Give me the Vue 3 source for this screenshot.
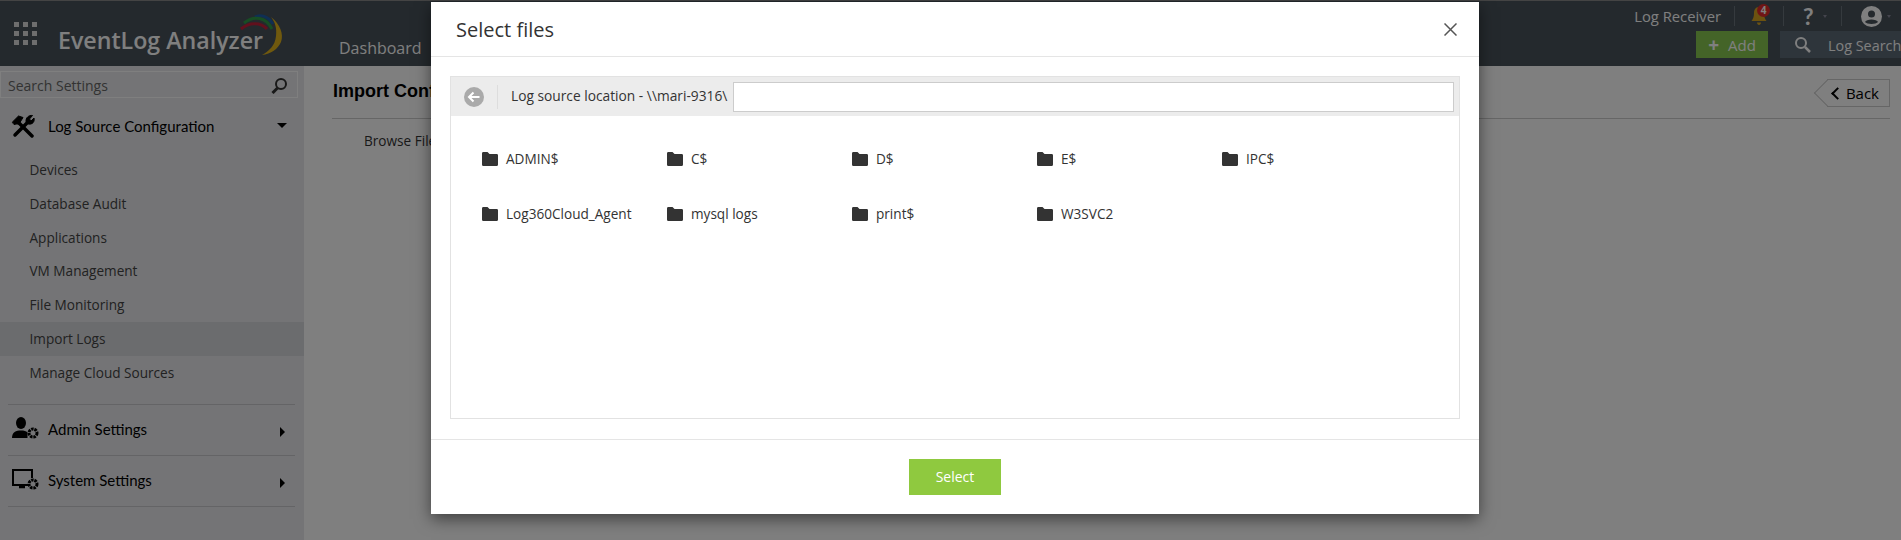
<template>
  <div class="page">
    <header class="topbar">
      <div class="brand">
        <div class="apps"><i v-for="n in 9" :key="n"></i></div>
        <span class="brand-name">EventLog Analyzer</span>
        <svg class="brand-arc" width="46" height="44" viewBox="0 0 46 44" fill="none">
          <path d="M15 3C20 0 28 2 33 10" stroke="#1f5fa8" stroke-width="3" />
          <path d="M4 9C14 1 26 3 32 15" stroke="#2e9a48" stroke-width="3" />
          <path d="M1 15C9 8 21 8 27 15" stroke="#c2203a" stroke-width="3" />
          <path d="M31 3C40 10 44 20 41 28C38 35 31 40 22 41C29 37 35 32 36 22C37 14 35 8 31 3Z" fill="#e0b21c" />
        </svg>
      </div>
      <nav class="nav"><a>Dashboard</a></nav>
      <div class="top-right">
        <div class="util-row">
          <span class="receiver">Log Receiver</span>
          <span class="bell">
            <svg width="16" height="20" viewBox="0 0 16 20"><path d="M8 1C4.500 1 3 4 3 7C3 11 2 13 .5 15H15.500C14 13 13 11 13 7C13 4 11.500 1 8 1ZM6 16.500H10C10 18 9 19 8 19C7 19 6 18 6 16.500Z" fill="#d8a520" /></svg>
            <b>4</b>
          </span>
          <span class="help">?<small></small></span>
          <span class="user">
            <svg width="21" height="21" viewBox="0 0 21 21"><circle cx="10.500" cy="10.500" r="10.500" fill="#fff" /><circle cx="10.500" cy="8" r="3.500" fill="#48525a" /><path d="M4 16C5 12.500 16 12.500 17 16C15 18.500 6 18.500 4 16Z" fill="#48525a" /></svg>
            <small></small>
          </span>
        </div>
        <div class="action-row">
          <button class="add"><span>+</span>Add</button>
          <div class="log-search">
            <svg width="17" height="17" viewBox="0 0 17 17" fill="none" stroke="#fff" stroke-width="2"><circle cx="7" cy="7" r="5" /><path d="M11 11L16 16" stroke-width="2.500" /></svg>
            <span>Log Search</span>
          </div>
        </div>
      </div>
    </header>

    <div class="content">
      <aside class="sidebar">
        <div class="side-search">
          <span>Search Settings</span>
          <svg width="17" height="17" viewBox="0 0 17 17" fill="none" stroke="#333" stroke-width="2"><circle cx="10" cy="7" r="5" /><path d="M6.500 11L1.500 16" stroke-width="3" /></svg>
        </div>
        <div class="group-head first">
          <svg width="24" height="24" viewBox="0 0 24 24" fill="#000" stroke="#000" stroke-linecap="round">
            <path d="M7 8L21 22" stroke-width="3.500" />
            <path d="M17 8L4 21" stroke-width="3.500" />
            <path d="M1.500 8L7.500 2L12 3.500L8 10L5 10L3.500 10.500Z" stroke-width="1" />
            <path d="M15 7.500C14.500 3.500 18 1 21.500 1.500L18.500 5L20 7L23 4C24 7.500 21.500 11 17.500 10Z" stroke-width="1" />
          </svg>
          <span>Log Source Configuration</span>
          <i class="caret-down"></i>
        </div>
        <ul class="side-list">
          <li v-for="item in sideItems" :key="item" :class="{ active: item === 'Import Logs' }">{{ item }}</li>
        </ul>
        <div class="group-head bordered">
          <svg width="28" height="22" viewBox="0 0 28 22" fill="#000">
            <ellipse cx="10" cy="6" rx="5" ry="6" />
            <path d="M1 21C1 15 5 13.500 10 13.500C13 13.500 15 14 16.500 15.500V21Z" />
            <circle cx="22" cy="16" r="4" fill="none" stroke="#000" stroke-width="3" stroke-dasharray="2.500 .8" />
          </svg>
          <span>Admin Settings</span>
          <i class="caret-right"></i>
        </div>
        <div class="group-head bordered last">
          <svg width="28" height="22" viewBox="0 0 28 22" fill="none" stroke="#000">
            <path d="M2 17V2H21V10" stroke-width="2" />
            <path d="M1 17H17" stroke-width="2" />
            <path d="M8 19H14" stroke-width="2.500" />
            <circle cx="22" cy="16" r="4" stroke-width="3" stroke-dasharray="2.500 .8" />
          </svg>
          <span>System Settings</span>
          <i class="caret-right"></i>
        </div>
      </aside>

      <main class="main">
        <div class="main-head">
          <h2>Import Configuration</h2>
          <div class="back"><i></i>Back</div>
        </div>
        <div class="browse">Browse Files</div>
      </main>
    </div>

    <div class="overlay"></div>

    <div class="modal">
      <div class="modal-head">
        <h3>Select files</h3>
        <svg class="close" width="13" height="13" viewBox="0 0 13 13" stroke="#555" stroke-width="1.500"><path d="M.5 .5L12.500 12.500M12.500 .5L.5 12.500" /></svg>
      </div>
      <div class="modal-body">
        <div class="browser">
          <div class="location">
            <div class="back-round">
              <svg width="20" height="20" viewBox="0 0 20 20"><circle cx="10" cy="10" r="10" fill="#aaa" /><path d="M15.500 10H5.500M9.500 5.500L5 10L9.500 14.500" fill="none" stroke="#fff" stroke-width="2" /></svg>
            </div>
            <span class="loc-label">Log source location - \\mari-9316\</span>
            <div class="loc-input"></div>
          </div>
          <div class="folders">
            <div v-for="f in folders" :key="f" class="folder">
              <svg width="16" height="14" viewBox="0 0 16 14"><path d="M0 1.500C0 .7 .5 0 1.300 0H5.500L7.500 2H14.700C15.500 2 16 2.600 16 3.300V12.500C16 13.300 15.500 14 14.700 14H1.300C.5 14 0 13.300 0 12.500Z" fill="#333" /></svg>
              <span>{{ f }}</span>
            </div>
          </div>
        </div>
      </div>
      <div class="modal-foot">
        <button class="select">Select</button>
      </div>
    </div>
  </div>
</template>

<script setup>
const sideItems = [
  'Devices',
  'Database Audit',
  'Applications',
  'VM Management',
  'File Monitoring',
  'Import Logs',
  'Manage Cloud Sources',
]

const folders = [
  'ADMIN$',
  'C$',
  'D$',
  'E$',
  'IPC$',
  'Log360Cloud_Agent',
  'mysql logs',
  'print$',
  'W3SVC2',
]
</script>

<style>
html, body {
  margin: 0;
  overflow: hidden;
}
</style>

<style scoped>
.page {
  position: relative;
  width: 1901px;
  height: 540px;
  overflow: hidden;
  background: #fff;
  font-family: "Open Sans", sans-serif;
  font-size: 14px;
  color: #333;
}

.topbar {
  height: 66px;
  box-sizing: border-box;
  background: #48525a;
  border-top: 1px solid #888;
  display: flex;
  color: #fff;
}

.brand {
  position: relative;
  width: 339px;
  display: flex;
  align-items: flex-start;
  flex: none;
}

.apps {
  margin: 21px 0 0 14px;
  width: 23px;
  display: grid;
  grid-template-columns: repeat(3, 5px);
  gap: 4px;
}

.apps i {
  height: 5px;
  background: #ddd;
}

.brand-name {
  margin: 23px 0 0 21px;
  font-size: 23.2px;
  line-height: 32px;
  font-weight: 600;
  white-space: nowrap;
}

.brand-arc {
  position: absolute;
  left: 240px;
  top: 13px;
  overflow: visible;
}

.nav {
  padding-top: 33px;
  font-size: 16px;
  line-height: 28px;
}

.top-right {
  margin-left: auto;
  width: 300px;
  flex: none;
  display: flex;
  flex-direction: column;
  align-items: flex-end;
}

.util-row {
  height: 30px;
  display: flex;
  align-items: center;
  font-size: 14.8px;
}

.receiver {
  padding-right: 13px;
  border-right: 1px solid #6a747c;
  line-height: 20px;
}

.bell {
  position: relative;
  width: 48px;
  height: 20px;
  border-right: 1px solid #6a747c;
  box-sizing: content-box;
  display: flex;
  justify-content: center;
}

.bell b {
  position: absolute;
  left: 22px;
  top: -2px;
  width: 13px;
  height: 13px;
  border-radius: 50%;
  background: #e02b2b;
  font-size: 10px;
  line-height: 13px;
  text-align: center;
}

.help {
  width: 58px;
  height: 20px;
  border-right: 1px solid #6a747c;
  font-family: "Lato", sans-serif;
  font-size: 23px;
  font-weight: 700;
  line-height: 20px;
  display: flex;
  align-items: center;
  padding-left: 19px;
  box-sizing: border-box;
  gap: 9px;
}

.user {
  width: 59px;
  display: flex;
  align-items: center;
  padding-left: 19px;
  box-sizing: border-box;
  gap: 5px;
}

small {
  display: block;
  border-left: 2.5px solid transparent;
  border-right: 2.5px solid transparent;
  border-top: 3px solid #889;
}

.action-row {
  display: flex;
  gap: 12px;
}

.add {
  width: 72px;
  height: 27px;
  border: 0;
  padding: 0;
  background: #88c850;
  color: #fff;
  font: 15px "Open Sans", sans-serif;
  display: flex;
  align-items: center;
  justify-content: center;
  gap: 9px;
}

.add span {
  font-size: 19px;
  font-weight: 700;
  line-height: 20px;
}

.log-search {
  width: 121px;
  height: 27px;
  background: #5c6a76;
  display: flex;
  align-items: center;
  gap: 17px;
  padding-left: 14px;
  box-sizing: border-box;
  font-size: 14.4px;
  line-height: 24px;
  white-space: nowrap;
}

.log-search svg {
  flex: none;
}

.log-search span {
  padding-top: 3px;
}

.content {
  display: flex;
  height: 474px;
}

.sidebar {
  width: 304px;
  flex: none;
  background: #e8e9ec;
  box-sizing: border-box;
  padding-top: 5px;
}

.side-search {
  width: 298px;
  height: 27px;
  box-sizing: border-box;
  border: 1px solid #fff;
  display: flex;
  align-items: center;
  justify-content: space-between;
  padding: 1px 9px 0 7px;
  color: #666;
  font-size: 14px;
}

.group-head {
  display: flex;
  align-items: center;
  font-family: "Lato", sans-serif;
  font-size: 15px;
  color: #000;
  position: relative;
}

.group-head svg {
  position: absolute;
  left: 11px;
}

.group-head span {
  margin-left: 48px;
}

.first {
  height: 50px;
  margin-top: 2px;
  padding-top: 1px;
  box-sizing: border-box;
}

.bordered {
  height: 51px;
  box-sizing: border-box;
  margin: 0 9px 0 8px;
  padding-bottom: 2px;
  border-top: 1px solid #c8c9cc;
}

.bordered svg {
  left: 3px;
  top: 12px;
}

.bordered span {
  margin-left: 40px;
}

.last {
  height: 52px;
  border-bottom: 1px solid #c8c9cc;
}

.caret-down {
  position: absolute;
  left: 277px;
  top: 23px;
  border-left: 5px solid transparent;
  border-right: 5px solid transparent;
  border-top: 5px solid #000;
}

.caret-right {
  position: absolute;
  left: 272px;
  top: 22px;
  border-top: 5px solid transparent;
  border-bottom: 5px solid transparent;
  border-left: 5px solid #000;
}

.side-list {
  list-style: none;
  margin: 0 0 14px;
  padding: 3px 0 0;
  height: 237px;
}

.side-list li {
  height: 33.8px;
  line-height: 34px;
  padding-left: 29.5px;
  font-size: 13.6px;
  color: #444;
}

.side-list li.active {
  background: #d6d8dc;
}

.main {
  flex: 1;
  padding: 0 11px 0 28px;
}

.main-head {
  height: 53px;
  box-sizing: border-box;
  border-bottom: 1px solid #ccc;
  display: flex;
  align-items: flex-start;
  justify-content: space-between;
}

.main-head h2 {
  margin: 11px 0 0;
  padding-left: 1px;
  font: 700 18px/28px "Liberation Sans", sans-serif;
  color: #000;
}

.back {
  position: relative;
  margin-top: 13px;
  width: 63px;
  height: 28px;
  box-sizing: border-box;
  border: 1px solid #ccc;
  border-left: 0;
  display: flex;
  align-items: center;
  justify-content: flex-end;
  padding-right: 10px;
  font-size: 15px;
  color: #000;
}

.back::before {
  content: "";
  position: absolute;
  left: -9px;
  top: 3px;
  width: 19px;
  height: 19px;
  border-left: 1px solid #ccc;
  border-bottom: 1px solid #ccc;
  transform: rotate(45deg);
}

.back i {
  position: absolute;
  left: 6px;
  top: 9px;
  width: 7px;
  height: 7px;
  border-left: 2.5px solid #000;
  border-bottom: 2.5px solid #000;
  transform: rotate(45deg);
}

.browse {
  padding: 11px 0 0 32px;
  font-size: 13.6px;
  line-height: 22px;
}

.overlay {
  position: absolute;
  inset: 0;
  background: rgba(0, 0, 0, 0.5);
}

.modal {
  position: absolute;
  left: 431px;
  top: 2px;
  width: 1048px;
  height: 512px;
  background: #fff;
  display: flex;
  flex-direction: column;
  box-shadow: 0 5px 15px rgba(0, 0, 0, 0.5);
}

.modal-head {
  height: 55px;
  box-sizing: border-box;
  border-bottom: 1px solid #e5e5e5;
  display: flex;
  align-items: center;
  justify-content: space-between;
  padding: 0 22px 0 25px;
  flex: none;
}

.modal-head h3 {
  margin: 0;
  font-size: 20px;
  font-weight: 400;
  color: #333;
}

.modal-body {
  height: 383px;
  box-sizing: border-box;
  border-bottom: 1px solid #e5e5e5;
  padding: 19px 19px 20px;
  flex: none;
}

.browser {
  height: 100%;
  box-sizing: border-box;
  border: 1px solid #e2e2e2;
}

.location {
  height: 39px;
  background: #ececec;
  display: flex;
  align-items: center;
}

.back-round {
  width: 47px;
  height: 24px;
  flex: none;
  box-sizing: border-box;
  border-right: 1px solid #ddd;
  display: flex;
  align-items: center;
  padding-left: 13px;
}

.loc-label {
  margin-left: 13px;
  margin-top: -2px;
  font-size: 13.75px;
  white-space: nowrap;
}

.loc-input {
  margin-left: 6px;
  flex: 1;
  height: 30px;
  margin-right: 5px;
  box-sizing: border-box;
  background: #fff;
  border: 1px solid #ccc;
}

.folders {
  display: grid;
  grid-template-columns: repeat(5, 185px);
  grid-auto-rows: 55px;
  padding: 15px 0 0 31px;
}

.folder {
  display: flex;
  align-items: center;
  gap: 8px;
  height: 55px;
  font-size: 13.6px;
  white-space: nowrap;
}

.modal-foot {
  flex: 1;
  display: flex;
  justify-content: center;
  padding-top: 19px;
}

.select {
  width: 92px;
  height: 36px;
  border: 0;
  padding: 0 0 2px;
  background: #8fc93f;
  color: #fff;
  font: 14px "Open Sans", sans-serif;
}
</style>
